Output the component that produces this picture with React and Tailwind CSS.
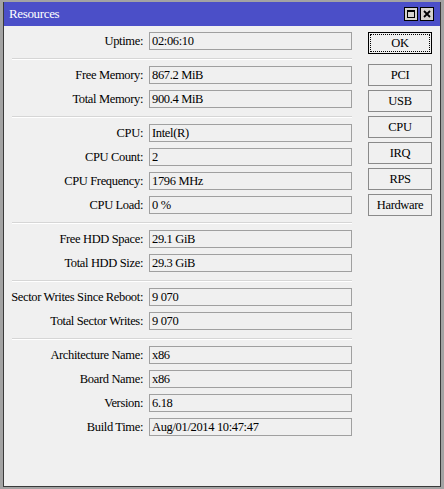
import React from "react";

const groups = [
  [["Uptime", "02:06:10"]],
  [
    ["Free Memory", "867.2 MiB"],
    ["Total Memory", "900.4 MiB"],
  ],
  [
    ["CPU", "Intel(R)"],
    ["CPU Count", "2"],
    ["CPU Frequency", "1796 MHz"],
    ["CPU Load", "0 %"],
  ],
  [
    ["Free HDD Space", "29.1 GiB"],
    ["Total HDD Size", "29.3 GiB"],
  ],
  [
    ["Sector Writes Since Reboot", "9 070"],
    ["Total Sector Writes", "9 070"],
  ],
  [
    ["Architecture Name", "x86"],
    ["Board Name", "x86"],
    ["Version", "6.18"],
    ["Build Time", "Aug/01/2014 10:47:47"],
  ],
];

const buttons = ["PCI", "USB", "CPU", "IRQ", "RPS", "Hardware"];

const Field = ({ label, value }) => (
  <div className="flex items-center h-[18px]">
    <div className="w-[145px] text-right pr-[6px] leading-none whitespace-nowrap">
      {label}:
    </div>
    <div className="w-[203px] h-[18px] border border-[#a0a0a0] bg-[#f0f0f0] pl-[2px] flex items-center leading-none whitespace-nowrap">
      {value}
    </div>
  </div>
);

export default function App() {
  return (
    <div
      className="w-[444px] h-[489px] bg-[#a3a3a3] pt-[2px] px-[3px] pb-[2px] text-[12.5px] tracking-[-0.35px] text-black"
      style={{ fontFamily: '"Liberation Serif", "Times New Roman", serif' }}
    >
      <div className="h-full flex flex-col border-x border-b border-[#3a3a3a]">
        <div className="h-[24px] bg-[#4b4fc8] flex items-center pl-[5px] pr-[6px] shrink-0">
          <span className="text-white text-[13px] flex-1">Resources</span>
          <div className="flex gap-[2px]">
            <div className="w-[14px] h-[14px] bg-[#d6d3ce] border border-black flex items-center justify-center">
              <div className="w-[8px] h-[8px] border border-black border-t-2" />
            </div>
            <div className="w-[14px] h-[14px] bg-[#d6d3ce] border border-black flex items-center justify-center">
              <svg width="8" height="8" viewBox="0 0 8 8">
                <path d="M1 1L7 7M7 1L1 7" stroke="black" strokeWidth="1.8" />
              </svg>
            </div>
          </div>
        </div>
        <div className="flex-1 bg-[#f0f0f0] flex pt-[6px]">
          <div className="flex flex-col w-[348px]">
            {groups.map((g, gi) => (
              <div key={gi} className="flex flex-col">
                {gi > 0 && (
                  <div className="ml-[8px] w-[340px] mt-[8px] mb-[6px] border-t border-[#d6d6d6] border-b border-b-white" />
                )}
                <div className="flex flex-col gap-[6px]">
                  {g.map(([l, v]) => (
                    <Field key={l} label={l} value={v} />
                  ))}
                </div>
              </div>
            ))}
          </div>
          <div className="flex flex-col ml-[16px] w-[64px]">
            <div className="h-[22px] border border-black p-[1px]">
              <div className="h-full border border-dotted border-black flex items-center justify-center">
                OK
              </div>
            </div>
            <div className="flex flex-col gap-[4px] mt-[10px]">
              {buttons.map((b) => (
                <div
                  key={b}
                  className="h-[22px] border border-[#8a8a8a] flex items-center justify-center"
                >
                  {b}
                </div>
              ))}
            </div>
          </div>
        </div>
      </div>
    </div>
  );
}
